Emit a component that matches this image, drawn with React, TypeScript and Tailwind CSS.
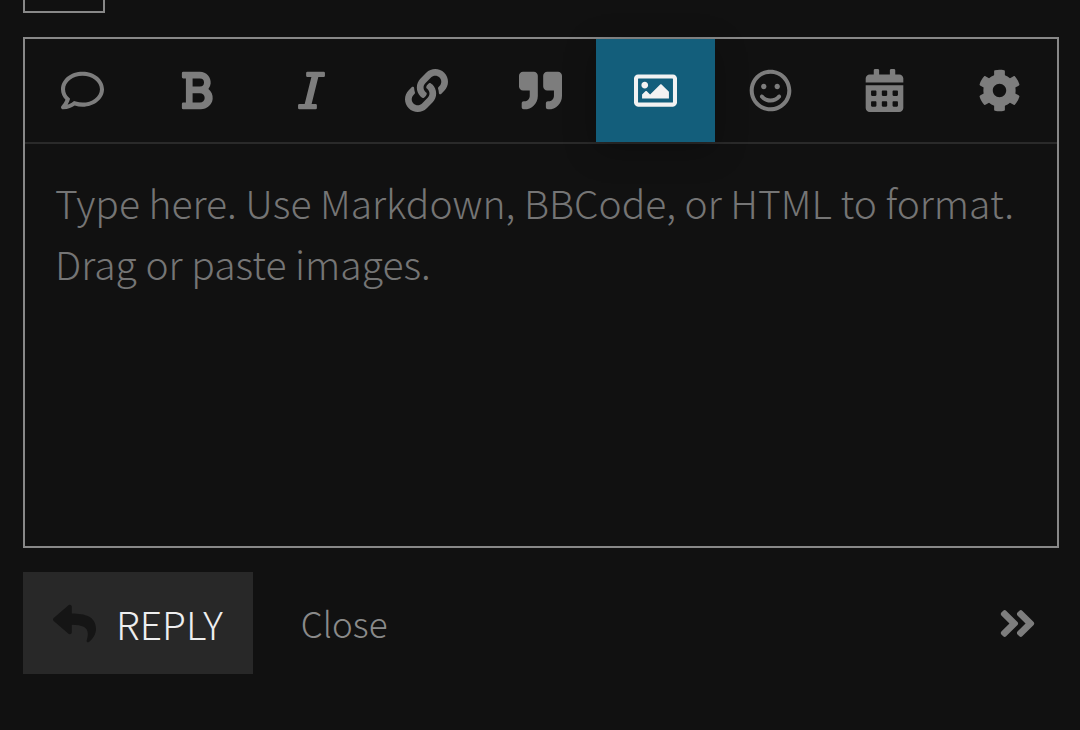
import { useState } from 'react';
import type { IconType } from 'react-icons';
import {
  FaAngleDoubleRight,
  FaBold,
  FaCalendarAlt,
  FaCog,
  FaItalic,
  FaLink,
  FaQuoteRight,
  FaRegComment,
  FaRegImage,
  FaRegSmile,
  FaReply,
} from 'react-icons/fa';

interface Tool {
  label: string;
  icon: IconType;
}

const tools: Tool[] = [
  { label: 'Whisper', icon: FaRegComment },
  { label: 'Bold', icon: FaBold },
  { label: 'Italic', icon: FaItalic },
  { label: 'Link', icon: FaLink },
  { label: 'Quote', icon: FaQuoteRight },
  { label: 'Upload image', icon: FaRegImage },
  { label: 'Emoji', icon: FaRegSmile },
  { label: 'Insert date', icon: FaCalendarAlt },
  { label: 'Options', icon: FaCog },
];

const Toolbar = () => {
  const [active, setActive] = useState('Upload image');

  return (
    <div className="grid grid-cols-9 border-b-2 border-[#2a2a2a]">
      {tools.map(({ label, icon: Icon }) => (
        <button
          key={label}
          type="button"
          aria-label={label}
          onClick={() => setActive(label)}
          className={`-mx-0.5 flex h-[103px] items-center justify-center text-[43px] ${
            active === label
              ? 'bg-[#135e7b] text-[#f2f2f2] shadow-[0_8px_30px_rgba(0,0,0,0.25)]'
              : 'text-[#7d7d7d]'
          }`}
        >
          <Icon />
        </button>
      ))}
    </div>
  );
};

const App = () => {
  const [text, setText] = useState('');

  return (
    <div className="min-h-screen bg-[#111111] pr-[21px] pl-[23px] font-['Noto_Sans_CJK_SC',sans-serif] font-light">
      <button
        type="button"
        aria-label="Topic options"
        className="block h-[13px] w-[82px] border-2 border-t-0 border-[#888888]"
      />
      <div className="mt-6 border-2 border-[#888888]">
        <Toolbar />
        <textarea
          aria-label="Reply"
          value={text}
          onChange={(e) => setText(e.target.value)}
          placeholder="Type here. Use Markdown, BBCode, or HTML to format. Drag or paste images."
          className="block h-[402px] w-full resize-none bg-transparent px-[30px] py-7 text-[39px] leading-[61px] text-[#dddddd] outline-none placeholder:text-[#757575]"
        />
      </div>
      <div className="mt-6 flex items-center leading-[102px]">
        <button
          type="button"
          className="flex h-[102px] items-center bg-[#282828] px-[30px] text-[39px] text-[#eeeeee]"
        >
          <FaReply className="mr-5 text-[43px] text-[#151515]" />
          REPLY
        </button>
        <a href="#close" className="ml-12 text-[35px] text-[#8a8a8a]">
          Close
        </a>
        <button
          type="button"
          aria-label="Toggle preview"
          className="mr-5 ml-auto text-[43px] text-[#7d7d7d]"
        >
          <FaAngleDoubleRight />
        </button>
      </div>
    </div>
  );
};

export default App;
